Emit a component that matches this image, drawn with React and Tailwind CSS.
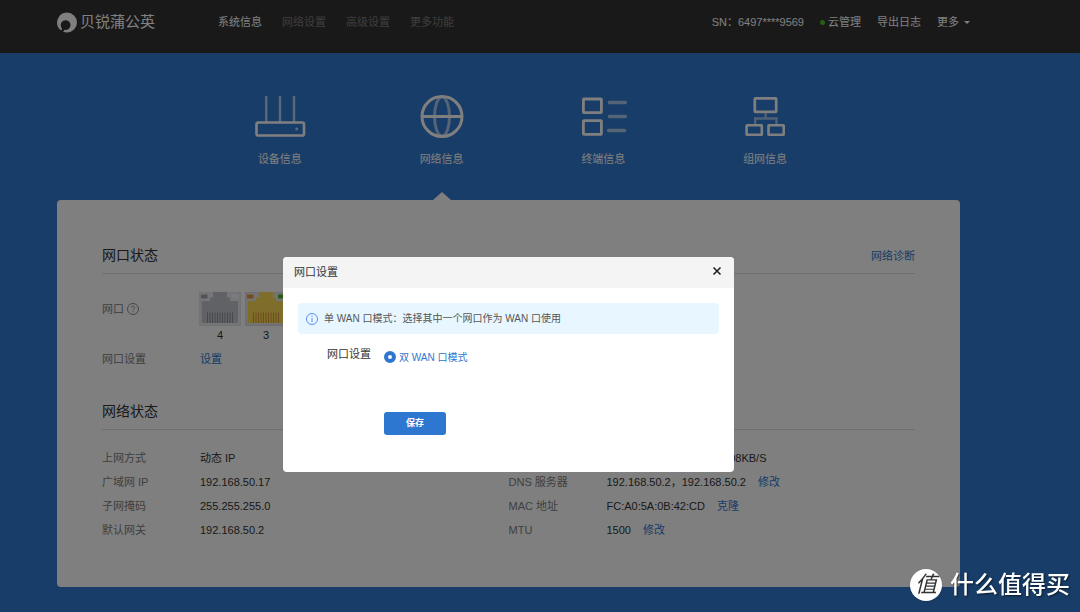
import { useState } from 'react';

const NAV = ['系统信息', '网络设置', '高级设置', '更多功能'];

const LEFT_ROWS = [
  { label: '上网方式', value: '动态 IP' },
  { label: '广域网 IP', value: '192.168.50.17' },
  { label: '子网掩码', value: '255.255.255.0' },
  { label: '默认网关', value: '192.168.50.2' },
];

const RIGHT_ROWS = [
  { label: '实时速率', value: <Speed up="0.55KB/S" down="1.08KB/S" /> },
  { label: 'DNS 服务器', value: '192.168.50.2，192.168.50.2', action: '修改' },
  { label: 'MAC 地址', value: 'FC:A0:5A:0B:42:CD', action: '克隆' },
  { label: 'MTU', value: '1500', action: '修改' },
];

const PORTS = [
  { id: 4, linked: false },
  { id: 3, linked: true },
  { id: 2, linked: false },
  { id: 1, linked: true },
];

function RouterIcon() {
  return (
    <svg viewBox="0 0 52 44" className="h-11 w-[52px]" fill="none" stroke="currentColor" aria-hidden="true">
      <path d="M12.2 2v25M26 2v25M40 2v25" strokeWidth="2.4" strokeLinecap="round" opacity="0.65" />
      <rect x="2.5" y="27.5" width="47.5" height="13" rx="1.8" strokeWidth="2.6" />
      <circle cx="42.7" cy="34" r="1.4" fill="currentColor" stroke="none" opacity="0.7" />
    </svg>
  );
}

function GlobeIcon() {
  return (
    <svg viewBox="0 0 52 44" className="h-11 w-[52px]" fill="none" stroke="currentColor" aria-hidden="true">
      <ellipse cx="26" cy="21.5" rx="7.5" ry="19.5" strokeWidth="3" opacity="0.6" />
      <circle cx="26" cy="21.5" r="20" strokeWidth="3" />
      <path d="M6 21.5h40" strokeWidth="3" />
    </svg>
  );
}

function DevicesIcon() {
  return (
    <svg viewBox="0 0 52 44" className="h-11 w-[52px]" fill="none" stroke="currentColor" aria-hidden="true">
      <rect x="6.4" y="4" width="18" height="13.7" rx="0.6" strokeWidth="2.8" />
      <rect x="6.4" y="25.7" width="18" height="13.7" rx="0.6" strokeWidth="2.8" />
      <path d="M32.4 7.5h16M32.4 21.5h16M31.6 35.5h16" strokeWidth="3.4" strokeLinecap="round" opacity="0.6" />
    </svg>
  );
}

function TopologyIcon() {
  return (
    <svg viewBox="0 0 52 44" className="h-11 w-[52px]" fill="none" stroke="currentColor" aria-hidden="true">
      <path d="M26.6 18v5.5M16.2 30v-6.5h21.3V30" strokeWidth="2.4" opacity="0.55" />
      <rect x="15.8" y="3.3" width="21.4" height="13.6" rx="0.6" strokeWidth="2.7" />
      <rect x="7.6" y="30.2" width="15.2" height="9.6" rx="0.6" strokeWidth="2.6" />
      <rect x="29.5" y="30.2" width="15.2" height="9.6" rx="0.6" strokeWidth="2.6" />
    </svg>
  );
}

const TABS = [
  { label: '设备信息', icon: RouterIcon },
  { label: '网络信息', icon: GlobeIcon },
  { label: '终端信息', icon: DevicesIcon },
  { label: '组网信息', icon: TopologyIcon },
];

function Speed({ up, down }) {
  return (
    <span className="flex w-40 justify-between">
      <span>↑ {up}</span>
      <span>↓ {down}</span>
    </span>
  );
}

function Logo() {
  return (
    <a href="#home" className="flex w-[161px] items-center gap-[3px] text-white">
      <svg viewBox="0 0 20 21" className="h-[21px] w-5 shrink-0" aria-hidden="true">
        <path
          d="M10 .5a10 10 0 0 1 0 20c-1.500 0-2.900-.3-4.200-.9 1-.4 1.500-1 1.600-1.800A4.900 4.900 0 1 0 3.700 13c0 1.500.6 2.800 1.400 3.700 0 .7-.4 1.200-1.200 1.600A10 10 0 0 1 10 .5z"
          fill="currentColor"
        />
      </svg>
      <span className="text-[15px] leading-5">贝锐蒲公英</span>
    </a>
  );
}

function Header() {
  return (
    <header className="h-[53px] bg-[#333] pr-[110px] pl-[57px] text-[11px] text-white">
      <div className="flex h-11 items-center">
        <Logo />
        <nav className="flex gap-5">
          {NAV.map((item, i) => (
            <a key={item} href="#nav" className={i === 0 ? 'text-white' : 'text-[#7c7c7c]'}>
              {item}
            </a>
          ))}
        </nav>
        <div className="ml-auto flex items-center gap-4">
          <span>SN：6497****9569</span>
          <a href="#cloud" className="flex items-center gap-[3px]">
            <span className="size-[5px] rounded-full bg-[#52b82a]" />
            云管理
          </a>
          <a href="#log">导出日志</a>
          <button type="button" className="flex items-center gap-[5px]">
            更多
            <span className="border-x-[3px] border-t-[3px] border-x-transparent border-t-white" />
          </button>
        </div>
      </div>
    </header>
  );
}

function Tabs() {
  return (
    <nav className="grid grid-cols-4 pr-[114px] pl-[142px] text-[11px] text-white">
      {TABS.map(({ label, icon: Icon }, i) => (
        <a key={label} href="#tab" className="flex flex-col items-center pt-[42px]">
          <Icon />
          <span className="mt-3 leading-4">{label}</span>
          <span
            className={
              i === 1
                ? 'mt-[25px] border-x-[9px] border-b-8 border-x-transparent border-b-white'
                : 'mt-[25px] h-2'
            }
          />
        </a>
      ))}
    </nav>
  );
}

function Port({ id, linked }) {
  return (
    <div className="flex flex-col items-center">
      <svg viewBox="0 0 42 34" className="h-[34px] w-[42px]" aria-hidden="true">
        <rect width="42" height="34" fill={linked ? '#dcdde0' : '#e2e4e8'} />
        <rect x="1.500" y="1" width="39" height="31.500" fill={linked ? '#e8e8ea' : '#eceef0'} />
        <rect x="2" y="2.500" width="6.500" height="4" fill={linked ? '#f0943a' : '#a4a7b0'} />
        <rect x="33" y="2.500" width="6.500" height="4" fill={linked ? '#4fb52a' : '#f4f6fa'} />
        <path d="M2.700 9H11V5.500h3V0h14v5.500h3V9h8v22H2.700z" fill={linked ? '#ffda58' : '#c2c4cc'} />
        <path
          d="M8.500 20.500V31M11 20.500V31M13.500 20.500V31M16 20.500V31M18.500 20.500V31M21 20.500V31M23.500 20.500V31M26 20.500V31M28.500 20.500V31M31 20.500V31M33.500 20.500V31"
          stroke={linked ? '#d89a30' : '#8e9098'}
          strokeWidth="1"
        />
      </svg>
      <span className="leading-[18px]">{id}</span>
    </div>
  );
}

function SectionTitle({ children, action }) {
  return (
    <div className="flex h-[30px] items-start justify-between border-b border-[#dedede]">
      <h2 className="text-sm leading-[22px] text-[#333]">{children}</h2>
      {action}
    </div>
  );
}

function InfoList({ rows }) {
  return (
    <dl>
      {rows.map((row) => (
        <div key={row.label} className="flex h-6 items-center">
          <dt className="w-[98px] shrink-0 text-[#808080]">{row.label}</dt>
          <dd className="flex gap-3 whitespace-nowrap">
            {row.value}
            {row.action && (
              <a href="#edit" className="text-[#2e77d0]">
                {row.action}
              </a>
            )}
          </dd>
        </div>
      ))}
    </dl>
  );
}

function StatusCard() {
  return (
    <main className="rounded-sm bg-white px-[45px] pt-11 pb-[45px] text-[11px] text-[#333]">
      <SectionTitle
        action={
          <a href="#diagnose" className="leading-6 text-[#2e77d0]">
            网络诊断
          </a>
        }
      >
        网口状态
      </SectionTitle>
      <div className="flex pt-[18px]">
        <div className="flex h-[34px] w-[97px] shrink-0 items-center gap-[3px] text-[#808080]">
          网口
          <svg viewBox="0 0 12 12" className="size-3" fill="none" stroke="currentColor" aria-hidden="true">
            <circle cx="6" cy="6" r="5.500" strokeWidth="0.9" />
            <path d="M4.400 4.700a1.600 1.600 0 1 1 2.400 1.400c-.6.300-.8.600-.8 1.100M6 8.300v.9" strokeWidth="0.9" />
          </svg>
        </div>
        <div className="flex gap-1">
          {PORTS.map((port) => (
            <Port key={port.id} {...port} />
          ))}
        </div>
      </div>
      <div className="flex h-[30px] items-center">
        <span className="w-[98px] text-[#808080]">网口设置</span>
        <a href="#ports" className="text-[#2e77d0]">
          设置
        </a>
      </div>
      <div className="mt-[26px]">
        <SectionTitle>网络状态</SectionTitle>
        <div className="grid grid-cols-2 pt-4">
          <InfoList rows={LEFT_ROWS} />
          <InfoList rows={RIGHT_ROWS} />
        </div>
      </div>
    </main>
  );
}

function PortDialog({ onClose }) {
  const [dualWan, setDualWan] = useState(true);

  return (
    <div className="fixed inset-0 flex items-start justify-center bg-black/50 pt-[257px] pr-[63px]">
      <div
        role="dialog"
        aria-labelledby="port-dialog-title"
        className="w-full max-w-[451px] overflow-hidden rounded-sm bg-white text-[11px] text-[#333]"
      >
        <div className="flex h-[31px] justify-between bg-[#f4f4f4] pr-3 pl-[11px]">
          <h3 id="port-dialog-title" className="leading-[31px]">
            网口设置
          </h3>
          <button type="button" aria-label="关闭" onClick={onClose} className="h-7">
            <svg viewBox="0 0 10 10" className="size-[10px]" stroke="#222" strokeWidth="1.600" aria-hidden="true">
              <path d="M1.500 1.500l7 7M8.500 1.500l-7 7" />
            </svg>
          </button>
        </div>
        <div className="px-[15px] pt-[15px] pb-[37px]">
          <p className="flex h-[31px] items-center gap-[6px] rounded-sm bg-[#e8f7ff] px-2 text-[10px] text-[#555]">
            <svg viewBox="0 0 12 12" className="size-3 shrink-0" fill="none" stroke="#5b8cf5" aria-hidden="true">
              <circle cx="6" cy="6" r="5.500" />
              <path d="M6 2.700v1.200M6 5v4.300" />
            </svg>
            单 WAN 口模式：选择其中一个网口作为 WAN 口使用
          </p>
          <form className="pl-[29px]" onSubmit={(e) => e.preventDefault()}>
            <fieldset className="flex pt-3">
              <legend className="float-left w-[57px] leading-4">网口设置</legend>
              <label className="mt-[3px] flex h-4 items-center gap-[3px] text-[10px] text-[#2e77d0]">
                <input
                  type="radio"
                  name="wan-mode"
                  checked={dualWan}
                  onChange={() => setDualWan(true)}
                  className="size-3 appearance-none rounded-full border border-[#2e77d0] bg-white checked:border-4"
                />
                双 WAN 口模式
              </label>
            </fieldset>
            <button
              type="submit"
              className="mt-[47px] ml-[57px] h-[23px] w-[62px] rounded-[3px] bg-[#2e77d0] text-[9px] font-bold text-white"
            >
              保存
            </button>
          </form>
        </div>
      </div>
    </div>
  );
}

function Watermark() {
  return (
    <div className="pointer-events-none fixed right-[10px] bottom-[11px] flex items-center gap-2 text-white">
      <span className="flex size-8 items-center justify-center rounded-full bg-white text-[22px] leading-8 text-[#333] italic shadow">
        值
      </span>
      <span className="text-2xl leading-8 font-medium [text-shadow:1px_1px_2px_rgb(0_0_0/0.6)]">什么值得买</span>
    </div>
  );
}

export default function App() {
  const [open, setOpen] = useState(true);

  return (
    <div className="min-h-screen bg-[#307ad0] font-['Liberation_Sans','Noto_Sans_CJK_SC',sans-serif]">
      <Header />
      <div className="pr-[120px] pb-6 pl-[57px]">
        <Tabs />
        <StatusCard />
      </div>
      {open && <PortDialog onClose={() => setOpen(false)} />}
      <Watermark />
    </div>
  );
}
